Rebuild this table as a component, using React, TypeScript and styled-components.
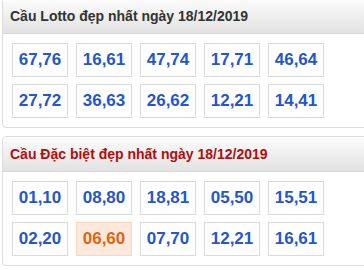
import React from "react";
import styled, { createGlobalStyle } from "styled-components";

const GlobalStyle = createGlobalStyle`
  body {
    margin: 0;
    background: #fff;
    font-family: "Liberation Sans", Arial, sans-serif;
    overflow: hidden;
  }
`;

const Page = styled.div`
  width: 364px;
  height: 270px;
  overflow: hidden;
  padding-left: 2px;
  box-sizing: border-box;
`;

const Panel = styled.section<{ $first?: boolean }>`
  width: 368px;
  border: 1px solid #dcdcdc;
  border-radius: 4px;
  margin-top: ${(p) => (p.$first ? "-2px" : "8px")};
  overflow: hidden;
`;

const Header = styled.h2<{ $red?: boolean }>`
  margin: 0;
  height: 34px;
  display: flex;
  align-items: center;
  padding-left: 7px;
  font-size: 14px;
  font-weight: bold;
  color: ${(p) => (p.$red ? "#b30d0d" : "#333")};
  background: linear-gradient(#fcfcfc, #e2e2e2);
  border-bottom: 1px solid #d8d8d8;
`;

const Grid = styled.div`
  display: grid;
  grid-template-columns: repeat(5, 56px);
  column-gap: 8px;
  row-gap: 7px;
  padding: 9px 0 9px 9px;
`;

const Cell = styled.div<{ $hot?: boolean }>`
  height: 34px;
  box-sizing: border-box;
  border: 1px solid ${(p) => (p.$hot ? "#f6d6bf" : "#dadada")};
  background: ${(p) => (p.$hot ? "#fde9dc" : "#fff")};
  color: ${(p) => (p.$hot ? "#dd6414" : "#2456cc")};
  font-size: 17px;
  font-weight: bold;
  display: flex;
  align-items: center;
  justify-content: center;
`;

const lotto = ["67,76", "16,61", "47,74", "17,71", "46,64", "27,72", "36,63", "26,62", "12,21", "14,41"];
const special = ["01,10", "08,80", "18,81", "05,50", "15,51", "02,20", "06,60", "07,70", "12,21", "16,61"];

export default function App() {
  return (
    <Page>
      <GlobalStyle />
      <Panel $first>
        <Header>Cầu Lotto đẹp nhất ngày 18/12/2019</Header>
        <Grid>
          {lotto.map((n, i) => (
            <Cell key={i}>{n}</Cell>
          ))}
        </Grid>
      </Panel>
      <Panel>
        <Header $red>Cầu Đặc biệt đẹp nhất ngày 18/12/2019</Header>
        <Grid>
          {special.map((n, i) => (
            <Cell key={i} $hot={n === "06,60"}>
              {n}
            </Cell>
          ))}
        </Grid>
      </Panel>
    </Page>
  );
}
